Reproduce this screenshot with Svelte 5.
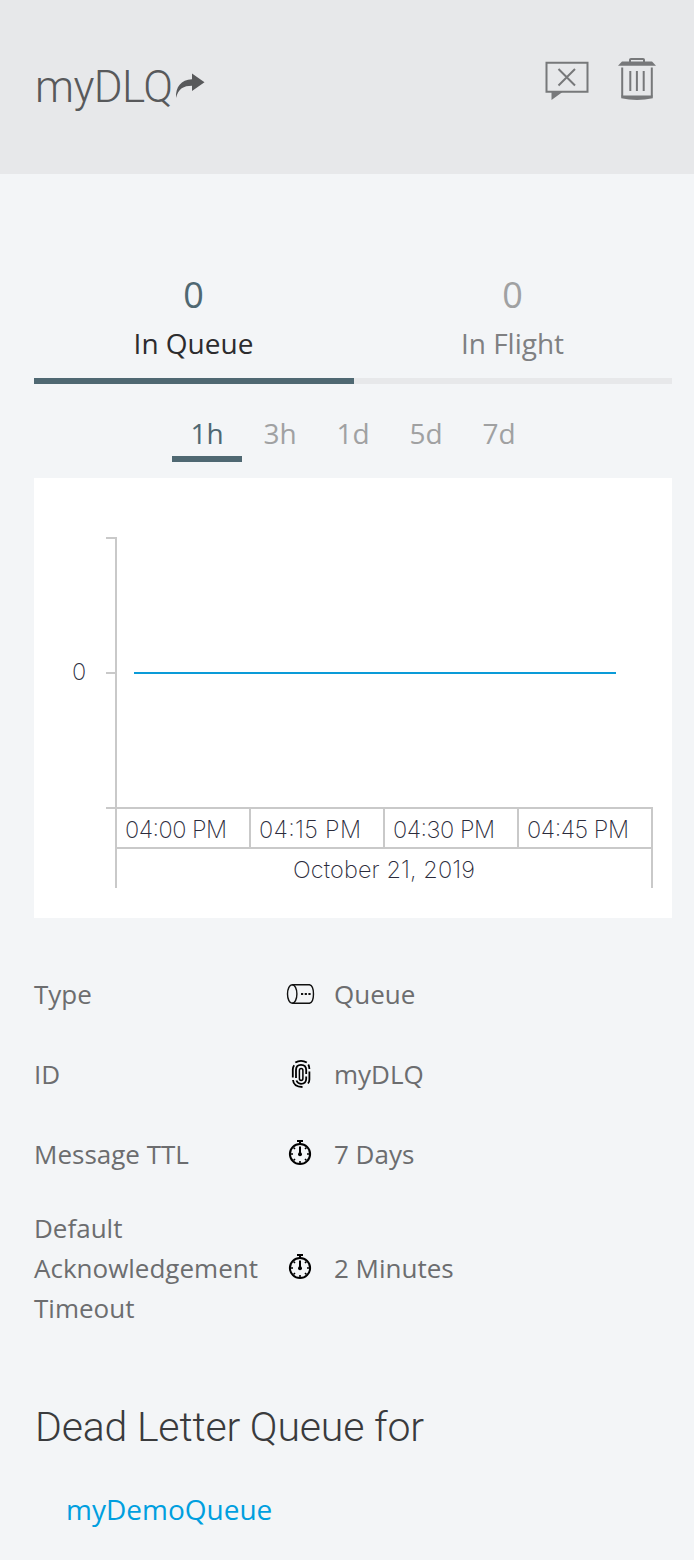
<script>
  const metrics = [
    { value: 0, label: 'In Queue', active: true },
    { value: 0, label: 'In Flight', active: false },
  ];
  const ranges = ['1h', '3h', '1d', '5d', '7d'];
  const selected = '1h';
  const ticks = ['04:00 PM', '04:15 PM', '04:30 PM', '04:45 PM'];
  const details = [
    { label: 'Type', icon: 'queue', value: 'Queue' },
    { label: 'ID', icon: 'finger', value: 'myDLQ' },
    { label: 'Message TTL', icon: 'watch', value: '7 Days' },
    { label: 'Default Acknowledgement Timeout', icon: 'watch', value: '2 Minutes' },
  ];
</script>

<div class="panel">
  <header>
    <h1>myDLQ</h1>
    <svg class="share" width="30" height="28" viewBox="175 72 30 28" fill="#58595b">
      <path d="M176 98C175.500 87 181 79.500 192 79.200V73.500L204.500 82.300L192 91V85.700C183.500 85.700 178.500 88.500 176 98Z" />
    </svg>
    <div class="actions">
      <svg width="46" height="42" viewBox="544 60 46 42" fill="none" stroke="#77787a" stroke-width="2">
        <path d="M546.500 62.700H587.500V91.700H546.500Z" />
        <path d="M558.500 69L575 85.500M575 69L558.500 85.500" />
        <path d="M551.500 92V100L562.500 92Z" fill="#77787a" stroke="none" />
      </svg>
      <svg width="38" height="44" viewBox="618 57 38 44" fill="none" stroke="#77787a" stroke-width="2">
        <path d="M630 62V59.800Q630 59 631 59H643Q644 59 644 59.800V62" />
        <path d="M622 61.500H652L656 65.800H618Z" fill="#77787a" stroke="none" />
        <path d="M622.200 67.500V96.500M651.800 67.500V96.500M630.300 71V91M636.900 71V91M643.700 71V91" />
        <path d="M621.200 95.500H652.800V98.300Q637 101.500 621.200 98.300Z" fill="#77787a" stroke="none" />
      </svg>
    </div>
  </header>

  <main>
    <div class="metrics">
      {#each metrics as m}
        <div class="metric" class:active={m.active}>
          <span class="num">{m.value}</span>
          <span class="name">{m.label}</span>
        </div>
      {/each}
    </div>

    <nav>
      {#each ranges as r}
        <span class="range" class:active={r === selected}>{r}</span>
      {/each}
    </nav>

    <svg class="chart" width="638" height="440" viewBox="34 478 638 440">
      <g fill="none" stroke="#c9c9c9" stroke-width="2">
        <path d="M106 538H116V888M106 673H116M106 808H652V888M116 848H652M250 808V848M384 808V848M518 808V848" />
      </g>
      <path d="M134 673H616" stroke="#0a9bd8" stroke-width="2" />
      <text x="72" y="680" textLength="14">0</text>
      {#each ticks as t, i}
        <text x={125 + i * 134} y="838" textLength="102">{t}</text>
      {/each}
      <text x="293" y="878" textLength="182">October 21, 2019</text>
    </svg>

    <dl>
      {#each details as d}
        <div class="row">
          <dt>{d.label}</dt>
          <dd>
            <span class="icon">
              {#if d.icon === 'queue'}
                <svg width="32" height="32" viewBox="284 978 32 32" fill="none" stroke="#111" stroke-width="1.400">
                  <ellipse cx="292.200" cy="994" rx="4.700" ry="9.300" />
                  <path d="M292.200 984.700H309.500C314.800 986 314.800 1002 309.500 1003.300H292.200" />
                  <path d="M301 994h2.200M304.700 994h2.200M308.400 994h2.200" stroke-width="2.200" />
                </svg>
              {:else if d.icon === 'finger'}
                <svg width="32" height="32" viewBox="284 1058 32 32" fill="none" stroke="#000" stroke-width="1.800">
                  <path d="M295.300 1062.600Q301 1059 306.800 1062.600" />
                  <path d="M292.800 1077.500V1069.500Q292.800 1067 294.200 1065.200" />
                  <path d="M308.300 1064.500Q309.400 1066.500 309.400 1069" />
                  <path d="M309.400 1071.500V1079.500Q309.400 1082 308 1083.500" />
                  <path d="M293 1080Q293.500 1086.800 302.500 1087" />
                  <path d="M296 1078V1070Q296 1064.800 301 1064.800Q306.200 1064.800 306.200 1070V1074" />
                  <path d="M306.200 1076.500V1079Q306 1083.800 301 1083.800Q297.600 1083.600 296.400 1080.500" />
                  <path d="M299.400 1073V1070.500Q299.400 1068.500 301.100 1068.500Q302.900 1068.500 302.900 1070.500V1078.500Q302.900 1080.400 301.100 1080.400Q299.400 1080.400 299.400 1078.500V1073" stroke-width="1.500" />
                </svg>
              {:else}
                <svg width="32" height="32" viewBox="284 1138 32 32" fill="none" stroke="#000" stroke-width="2">
                  <circle cx="300" cy="1154" r="10.100" />
                  <path d="M297 1141H303M300 1141V1144M300 1146.500V1154" />
                  <circle cx="300" cy="1154.200" r="2" fill="#000" stroke="none" />
                  <path d="M300 1161V1164M290 1154H293M307 1154H310M293.500 1147.500L295 1149M306.500 1147.500L305 1149M293.500 1160.500L295 1159M306.500 1160.500L305 1159" stroke-width="1.600" />
                </svg>
              {/if}
            </span>
            {d.value}
          </dd>
        </div>
      {/each}
    </dl>

    <h2>Dead Letter Queue for</h2>
    <span class="link">myDemoQueue</span>
  </main>
</div>

<style>
  :global(body) { background: #f3f5f7; }
  .panel {
    width: 694px;
    height: 1560px;
    overflow: hidden;
    background: #f3f5f7;
    color: #6c6d6f;
    font: 26px/40px 'Open Sans', sans-serif;
  }
  header {
    display: flex;
    align-items: flex-start;
    box-sizing: border-box;
    height: 174px;
    padding: 0 38px 0 34px;
    background: #e7e8ea;
  }
  h1, h2 {
    margin: 0;
    font-family: Roboto, sans-serif;
    font-weight: 300;
    white-space: nowrap;
  }
  h1 {
    box-sizing: border-box;
    width: 141px;
    margin-top: 57px;
    padding-left: 1px;
    font-size: 44px;
    line-height: 60px;
    letter-spacing: -0.6px;
    color: #58595b;
  }
  .share { margin-top: 72px; }
  .actions {
    display: flex;
    gap: 28px;
    margin: 57px 0 0 auto;
  }
  .actions svg:first-child { margin-top: 3px; }
  main { padding: 86px 22px 0 34px; }
  .metrics { display: flex; }
  .metric {
    display: flex;
    flex-direction: column;
    align-items: center;
    box-sizing: border-box;
    width: 318px;
    height: 124px;
    padding: 10px 1px 0 0;
    border-bottom: 6px solid #e7e8ea;
    color: #7f8082;
  }
  .metric.active {
    width: 320px;
    border-color: #4f6872;
    color: #2c2c2e;
  }
  .num {
    height: 50px;
    font-size: 36px;
    line-height: 50px;
    color: #a0a1a2;
  }
  .active .num { color: #4f6872; }
  .name { margin-top: 3px; font-size: 28px; }
  nav {
    display: flex;
    justify-content: center;
    gap: 3px;
    height: 94px;
  }
  .range {
    box-sizing: border-box;
    width: 70px;
    height: 78px;
    padding-top: 29px;
    border-bottom: 6px solid transparent;
    text-align: center;
    font-size: 28px;
    color: #a0a1a2;
  }
  .range.active { color: #4f6872; border-color: #4f6872; }
  .chart { display: block; background: #fff; }
  .chart text {
    font: 200 23.500px Inter, sans-serif;
    fill: #2b2b3b;
  }
  dl { margin: 36px 0 0; }
  .row {
    display: flex;
    align-items: center;
    box-sizing: border-box;
    min-height: 80px;
  }
  .row:last-child { padding: 14px 0; }
  dt { width: 250px; }
  dt, dd { margin: 0; }
  dd { display: flex; align-items: center; }
  .icon { display: flex; width: 50px; }
  h2 {
    margin-top: 55px;
    padding-left: 1px;
    font-size: 41px;
    line-height: 60px;
    letter-spacing: -0.18px;
    color: #3a3b3d;
  }
  .link {
    display: block;
    margin: 32px 0 0 32px;
    font-size: 28px;
    color: #009fdf;
  }
</style>
